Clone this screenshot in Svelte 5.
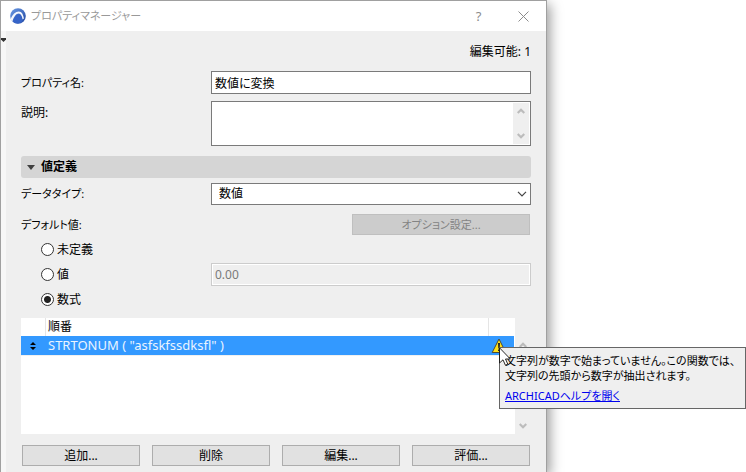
<script lang="ts">
	interface Formula {
		id: number;
		expression: string;
		warning: boolean;
	}

	const kinds = [
		{ value: 'undefined', label: '未定義' },
		{ value: 'value', label: '値' },
		{ value: 'formula', label: '数式' }
	];
	const actions = ['追加...', '削除', '編集...', '評価...'];

	let name = $state('数値に変換');
	let description = $state('');
	let dataType = $state('number');
	let defaultKind = $state('formula');
	let defaultValue = $state('0.00');
	let formulas: Formula[] = $state([
		{ id: 1, expression: 'STRTONUM ( "asfskfssdksfl" )', warning: true }
	]);
</script>

{#snippet chevron(up: boolean)}
	<svg class="chevron" class:up width="8" height="6" viewBox="0 0 8 6" aria-hidden="true">
		<path d="M0.7 1 L4 4.3 L7.3 1" fill="none" stroke="#bcbcbc" stroke-width="2.2" />
	</svg>
{/snippet}

<div class="desktop">
	<div class="window" role="dialog" aria-labelledby="window-title">
		<header class="titlebar">
			<svg width="16" height="16" viewBox="0 0 16 16" aria-hidden="true">
				<defs>
					<linearGradient id="ball" x1="0" y1="0" x2="1" y2="1">
						<stop offset="0" stop-color="#6b9be6" />
						<stop offset="1" stop-color="#1f459f" />
					</linearGradient>
				</defs>
				<circle cx="8" cy="8" r="7.8" fill="url(#ball)" />
				<path
					d="M0.6 11.2 C2.4 6.4 5.6 3.4 8.8 3.4 C11.8 3.4 13.4 6.6 13.9 10.6 L12.6 11.6 C12 8 10.8 5.6 8.8 5.6 C6 5.6 3.8 9 2.4 13.4 Z"
					fill="#f4f7fd"
				/>
				<path d="M3 13.8 C4 9.4 6.2 6.2 8.8 6.2 C10.8 6.2 11.8 9 12.4 13.2 C9.6 16 5.6 16 3 13.8 Z" fill="#3664c8" />
			</svg>
			<h1 id="window-title">プロパティマネージャー</h1>
			<button type="button" class="caption" aria-label="ヘルプ">?</button>
			<button type="button" class="caption" aria-label="閉じる">
				<svg width="11" height="11" viewBox="0 0 11 11" aria-hidden="true">
					<path d="M0.5 0.5 L10.5 10.5 M10.5 0.5 L0.5 10.5" stroke="#8c8c8c" />
				</svg>
			</button>
		</header>

		<div class="body">
			<div class="splitter">
				<svg width="5" height="4" viewBox="0 0 5 4" aria-hidden="true">
					<path d="M0 0 H5 V1.5 L2.5 4 L0 1.5 Z" fill="#333" />
				</svg>
			</div>

			<form class="panel">
				<p class="editable">編集可能: 1</p>

				<div class="row name-row">
					<label class="kana" for="name">プロパティ名:</label>
					<input id="name" type="text" class="input" bind:value={name} />
				</div>

				<div class="row description-row">
					<label for="description">説明:</label>
					<div class="memo">
						<textarea id="description" bind:value={description}></textarea>
						<div class="scroll">
							{@render chevron(true)}
							{@render chevron(false)}
						</div>
					</div>
				</div>

				<h2 class="section">
					<svg width="8" height="5" viewBox="0 0 8 5" aria-hidden="true">
						<path d="M0 0 H8 L4 5 Z" fill="#404040" />
					</svg>
					値定義
				</h2>

				<div class="row type-row">
					<label class="kana" for="type">データタイプ:</label>
					<div class="select">
						<select id="type" bind:value={dataType}>
							<option value="number">数値</option>
						</select>
						<svg width="10" height="6" viewBox="0 0 10 6" aria-hidden="true">
							<path d="M1 0.8 L5 4.8 L9 0.8" fill="none" stroke="#444" stroke-width="1.2" />
						</svg>
					</div>
				</div>

				<div class="row default-row">
					<span class="kana" id="default-label">デフォルト値:</span>
					<button type="button" class="btn options" disabled>オプション設定...</button>
				</div>

				<div role="radiogroup" aria-labelledby="default-label">
					{#each kinds as kind (kind.value)}
						<div class="row kind-row">
							<label class="kind">
								<input type="radio" name="kind" value={kind.value} bind:group={defaultKind} />
								{kind.label}
							</label>
							{#if kind.value === 'value'}
								<input
									type="text"
									class="input"
									aria-label="値"
									bind:value={defaultValue}
									disabled={defaultKind !== 'value'}
								/>
							{/if}
						</div>
					{/each}
				</div>

				<div class="list">
					<div class="sheet">
						<table>
							<colgroup>
								<col class="col-handle" />
								<col />
								<col class="col-status" />
							</colgroup>
							<thead>
								<tr>
									<th></th>
									<th>順番</th>
									<th></th>
								</tr>
							</thead>
							<tbody>
								{#each formulas as formula (formula.id)}
									<tr>
										<td class="handle">
											<svg width="6" height="8" viewBox="0 0 6 8" aria-hidden="true">
												<path d="M3 0 L6 3 H0 Z M0 5 H6 L3 8 Z" fill="#000" />
											</svg>
										</td>
										<td class="expression">{formula.expression}</td>
										<td class="status">
											{#if formula.warning}
												<svg class="warning" width="16" height="16" viewBox="0 0 16 16" aria-hidden="true">
													<path d="M8 1 L14.8 14.5 H1.2 Z" fill="#ffe11a" stroke="#4d4a33" stroke-linejoin="round" />
													<path d="M7 5 H9 L8.7 10.5 H7.3 Z M7 11.5 H9 V13 H7 Z" fill="#222" />
												</svg>
												<div class="tooltip" role="tooltip">
													<p>文字列が数字で始まっていません。この関数では、<br />文字列の先頭から数字が抽出されます。</p>
													<a href="#help">ARCHICADヘルプを開く</a>
												</div>
												<svg class="cursor" width="12" height="19" viewBox="0 0 12 19" aria-hidden="true">
													<path
														d="M0.5 0.8 V16 L4 12.8 L6.4 18.2 L8.8 17.2 L6.5 12 H11.3 Z"
														fill="#fff"
														stroke="#111"
														stroke-width="0.9"
													/>
												</svg>
											{/if}
										</td>
									</tr>
								{/each}
							</tbody>
						</table>
					</div>
					<div class="scroll">
						{@render chevron(true)}
						{@render chevron(false)}
					</div>
				</div>

				<div class="actions">
					{#each actions as action (action)}
						<button type="button" class="btn">{action}</button>
					{/each}
				</div>
			</form>
		</div>
	</div>
</div>

<style>
	:global(body) {
		background: #fff;
	}
	.desktop {
		box-sizing: border-box;
		min-height: 100vh;
		padding-right: 199px;
		display: flex;
		overflow: hidden;
		font-family: 'Noto Sans', 'Noto Sans CJK JP', sans-serif;
		font-size: 12px;
		line-height: 16px;
		font-feature-settings: 'palt';
		color: #000;
	}
	.desktop :is(input, textarea, select, button) {
		box-sizing: border-box;
		margin: 0;
		font: inherit;
		font-feature-settings: inherit;
		color: inherit;
	}
	.window {
		flex: 1;
		min-width: 0;
		display: flex;
		flex-direction: column;
		border: 1px solid #a0a0a0;
		border-bottom: none;
		background: #efefef;
		box-shadow: 3px 4px 12px rgba(0, 0, 0, 0.4);
	}
	.titlebar {
		display: flex;
		align-items: center;
		height: 30px;
		padding-left: 9px;
		background: #fff;
	}
	h1 {
		flex: 1;
		margin: 0 0 0 5px;
		font-size: 11px;
		font-weight: 400;
		color: #999;
	}
	.caption {
		display: flex;
		align-items: center;
		justify-content: center;
		width: 45px;
		height: 28px;
		padding: 0;
		border: none;
		background: none;
	}
	.desktop .caption {
		font-size: 13px;
		color: #8c8c8c;
	}
	.body {
		flex: 1;
		display: flex;
	}
	.splitter {
		width: 5px;
		padding-top: 5px;
		background: #f7f7f7;
		line-height: 4px;
	}
	.panel {
		flex: 1;
		min-width: 0;
		padding: 13px 15px 6px;
	}
	.editable {
		margin: 0 0 11px;
		text-align: right;
	}
	.row {
		display: grid;
		grid-template-columns: 190px 1fr;
		align-items: center;
	}
	.kana {
		font-size: 11px;
	}
	.name-row {
		margin-bottom: 7px;
	}
	.description-row {
		align-items: start;
		line-height: 23px;
	}
	.input {
		width: 100%;
		height: 23px;
		padding: 0 3px;
		border: 1px solid #7a7a7a;
		background: #fff;
	}
	.desktop .input:disabled {
		border-color: #ccc;
		background: #efefef;
		box-shadow: inset 0 0 0 1px #fff;
		color: #7a7a7a;
	}
	.memo {
		box-sizing: border-box;
		display: flex;
		height: 45px;
		padding: 1px;
		border: 1px solid #7a7a7a;
		background: #fff;
	}
	textarea {
		flex: 1;
		min-width: 0;
		padding: 1px 3px;
		border: none;
		resize: none;
		overflow: hidden;
	}
	.scroll {
		box-sizing: border-box;
		display: flex;
		flex-direction: column;
		align-items: center;
		justify-content: space-between;
		width: 16px;
		padding: 5px 0;
		background: #efefef;
	}
	.up {
		transform: rotate(180deg);
	}
	.section {
		display: flex;
		align-items: center;
		gap: 6px;
		height: 22px;
		margin: 10px 0 5px;
		padding-left: 6px;
		border-radius: 3px;
		background: #d5d5d5;
		font-size: 12px;
		font-weight: 700;
	}
	.select {
		display: grid;
		align-items: center;
	}
	.select > * {
		grid-area: 1 / 1;
	}
	.select svg {
		justify-self: end;
		margin-right: 4px;
		pointer-events: none;
	}
	select {
		appearance: none;
		width: 100%;
		height: 22px;
		padding: 0 20px 0 7px;
		border: 1px solid #7a7a7a;
		border-radius: 0;
		background: #fff;
	}
	.default-row {
		margin: 9px 0 2px;
	}
	.btn {
		height: 21px;
		padding: 0;
		border: 1px solid #adadad;
		background: #e1e1e1;
	}
	.desktop .options {
		justify-self: end;
		width: 178px;
		margin-right: 1px;
		border-color: #bfbfbf;
		background: #ccc;
		font-size: 11px;
		color: #838383;
	}
	.kind-row {
		height: 25px;
	}
	.kind {
		display: flex;
		align-items: center;
		gap: 3px;
		padding-left: 20px;
	}
	.kind input {
		appearance: none;
		width: 13px;
		height: 13px;
		border: 1px solid #333;
		border-radius: 50%;
		background: #fff;
	}
	.kind input:checked {
		background: radial-gradient(circle, #222 3px, #fff 4px);
	}
	.list {
		display: flex;
		height: 116px;
		margin: 6px 0 11px;
	}
	.sheet {
		flex: 1;
		min-width: 0;
		padding-right: 1px;
		background: #fff;
	}
	.list .scroll {
		padding: 24px 0 5px;
	}
	table {
		width: 100%;
		table-layout: fixed;
		border-collapse: separate;
		border-spacing: 0;
	}
	.col-handle {
		width: 24px;
	}
	.col-status {
		width: 26px;
	}
	th,
	td {
		box-sizing: border-box;
		padding: 0 0 0 3px;
		text-align: left;
		font-weight: 400;
	}
	th {
		height: 18px;
		line-height: 18px;
	}
	th + th {
		padding-left: 2px;
		border-left: 1px solid #e5e5e5;
	}
	td {
		height: 20px;
		border-bottom: 1px solid #f0f0f0;
		background: #3399ff;
		background-clip: padding-box;
		color: #eaf4ff;
		line-height: 19px;
	}
	.expression {
		font-size: 13px;
	}
	.handle {
		padding: 0;
		text-align: center;
		line-height: 8px;
	}
	.status {
		position: relative;
		line-height: 16px;
	}
	.warning {
		display: block;
	}
	.tooltip {
		position: absolute;
		z-index: 1;
		top: 11px;
		left: 11px;
		box-sizing: border-box;
		width: 247px;
		height: 62px;
		padding: 5px;
		border: 1px solid #666;
		background: #efefef;
		color: #000;
		font-size: 11px;
		line-height: 15px;
		white-space: nowrap;
	}
	.tooltip p {
		margin: 0 0 5px;
	}
	.tooltip a {
		color: #0000ee;
	}
	.cursor {
		position: absolute;
		z-index: 2;
		top: 11px;
		left: 11px;
	}
	.actions {
		display: grid;
		grid-template-columns: repeat(4, 1fr);
		gap: 12px;
		padding: 0 1px;
	}
</style>
